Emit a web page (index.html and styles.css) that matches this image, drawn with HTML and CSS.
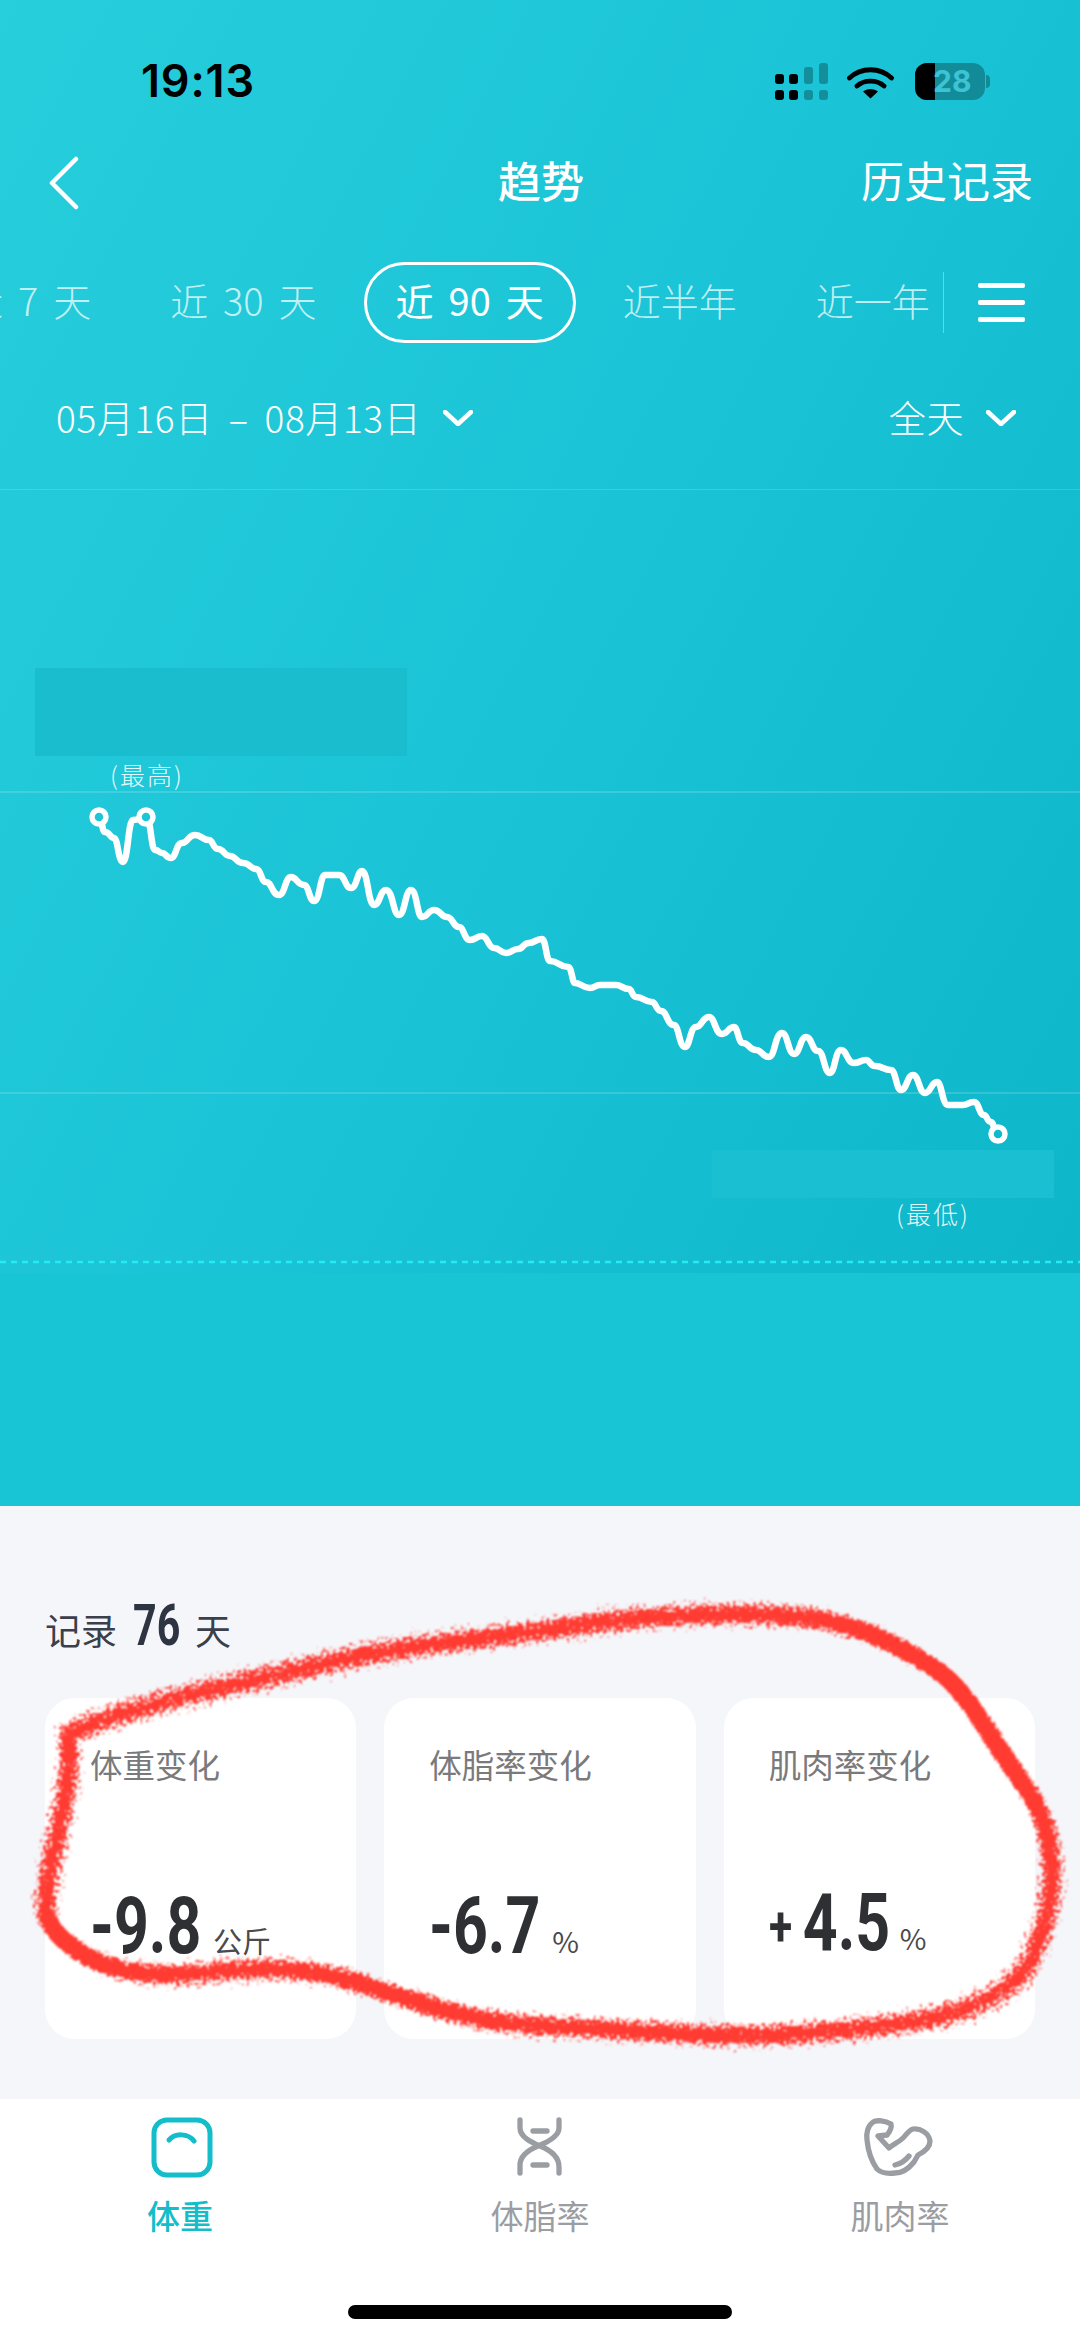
FILE: index.html
```html
<!DOCTYPE html>
<html lang="zh">
<head>
<meta charset="utf-8">
<title>趋势</title>
<link rel="stylesheet" href="styles.css">
</head>
<body>
<div class="screen">
  <section class="hero">
    <div class="status">
      <span class="time">19:13</span>
      <div class="status-icons">
        <svg class="signal" viewBox="0 0 54 37" width="54" height="37">
          <g fill="#000"><rect x="0" y="11" width="9" height="10" rx="3"/><rect x="14" y="11" width="9" height="10" rx="3"/><rect x="0" y="27" width="9" height="10" rx="3"/><rect x="14" y="27" width="9" height="10" rx="3"/></g>
          <g fill="#000" opacity=".27"><rect x="29" y="4" width="9" height="17" rx="3"/><rect x="44" y="0" width="9" height="21" rx="3"/><rect x="29" y="27" width="9" height="10" rx="3"/><rect x="44" y="27" width="9" height="10" rx="3"/></g>
        </svg>
        <svg class="wifi" viewBox="0 0 48 36" width="48" height="36">
          <path d="M2.5 15C14 4 33 4 44.5 15M10 23C17 16.500 30 16.500 37 23" fill="none" stroke="#000" stroke-width="4.800" stroke-linecap="round"/>
          <path d="M16 28.500C20 25 27 25 31 28.500L23.500 35.500Z" fill="#000"/>
        </svg>
        <div class="battery"><div class="battery-fill"></div><span class="battery-num">28</span><i class="battery-nub"></i></div>
      </div>
    </div>

    <header class="nav">
      <svg class="back" viewBox="0 0 30 54" width="30" height="54"><path d="M27 3L3 27L27 51" fill="none" stroke="#fff" stroke-width="4.500" stroke-linecap="round" stroke-linejoin="round"/></svg>
      <h1 class="title">趋势</h1>
      <a class="history">历史记录</a>
    </header>

    <div class="tabs">
      <div class="tab-scroll">
        <span class="tab">近 7 天</span>
        <span class="tab">近 30 天</span>
        <span class="tab active">近 90 天</span>
        <span class="tab">近半年</span>
        <span class="tab">近一年</span>
      </div>
      <div class="tab-menu"><i></i><i></i><i></i></div>
    </div>

    <div class="range">
      <span class="drop"><span class="drop-text">05月16日 – 08月13日</span>
        <svg viewBox="0 0 30 16" width="30" height="16"><path d="M2 2L15 14L28 2" fill="none" stroke="#fff" stroke-width="4.500" stroke-linecap="round" stroke-linejoin="round"/></svg>
      </span>
      <span class="drop"><span class="drop-text">全天</span>
        <svg viewBox="0 0 30 16" width="30" height="16"><path d="M2 2L15 14L28 2" fill="none" stroke="#fff" stroke-width="4.500" stroke-linecap="round" stroke-linejoin="round"/></svg>
      </span>
    </div>

    <div class="plot">
      <div class="mask mask-high"></div>
      <div class="mask mask-low"></div>
      <span class="point-label label-high">(最高)</span>
      <span class="point-label label-low">(最低)</span>
      <svg class="plot-svg" viewBox="0 489 1080 784" width="1080" height="784">
        <g stroke="#fff" stroke-opacity=".2" stroke-width="1.500">
          <line x1="0" y1="489" x2="1080" y2="489"/>
          <line x1="0" y1="792" x2="1080" y2="792"/>
          <line x1="0" y1="1093" x2="1080" y2="1093"/>
        </g>
        <line x1="0" y1="1262" x2="1080" y2="1262" stroke="#25ECF0" stroke-width="2.500" stroke-dasharray="6 5"/>
        <path fill="none" stroke="#fff" stroke-width="6.500" stroke-linecap="round" stroke-linejoin="round" d="M99 817C102 817 102 832 105 832C110 832 110 838 114 838C118 838 118 862 123 862C128 862 128 820 133 820C140 820 140 817 146 817C151 817 151 850 155 850C159 850 159 853 162 853C166 853 166 858 171 858C176 858 176 843 182 843C188 843 188 835 195 835C202 835 202 840 209 840C213 840 213 849 218 849C224 849 224 856 230 856C236 856 236 863 243 863C250 863 250 869 256 869C261 869 261 882 266 882C272 882 272 895 279 895C285 895 285 877 291 877C297 877 297 885 304 885C309 885 309 901 314 901C320 901 320 875 325 875L339 875C345 875 345 888 351 888C357 888 357 871 362 871C368 871 368 905 374 905C380 905 380 890 386 890C393 890 393 915 399 915C405 915 405 890 411 890C417 890 417 917 422 917C428 917 428 910 434 910C441 910 441 917 447 917C453 917 453 927 459 927C464 927 464 940 470 940C476 940 476 936 482 936C488 936 488 948 494 948C500 948 500 953 506 953C512 953 512 949 518 949C523 949 523 943 529 943C535 943 535 939 542 939C546 939 546 961 550 961C559 961 559 967 568 967C572 967 572 983 575 983C582 983 582 988 590 988C595 988 595 985 600 985L616 985C622 985 622 989 629 989C632 989 632 997 636 997C644 997 644 1002 652 1002C656 1002 656 1011 661 1011C667 1011 667 1025 674 1025C679 1025 679 1047 685 1047C690 1047 690 1027 696 1027C702 1027 702 1017 709 1017C715 1017 715 1034 722 1034C728 1034 728 1027 734 1027C738 1027 738 1043 743 1043C749 1043 749 1050 756 1050C762 1050 762 1057 769 1057C775 1057 775 1033 782 1033C788 1033 788 1054 794 1054C800 1054 800 1037 806 1037C812 1037 812 1051 818 1051C824 1051 824 1073 830 1073C835 1073 835 1050 841 1050C847 1050 847 1063 854 1063C860 1063 860 1060 866 1060C870 1060 870 1066 875 1066C883 1066 883 1070 891 1070C896 1070 896 1090 901 1090C907 1090 907 1075 913 1075C919 1075 919 1093 925 1093C931 1093 931 1082 937 1082C942 1082 942 1105 948 1105L963 1105C968 1105 968 1102 974 1102C979 1102 979 1115 984 1115C987 1115 987 1122 991 1122C994 1122 994 1134 998 1134"/>
        <g stroke="#fff" stroke-width="5.500">
          <circle cx="99" cy="817" r="7" fill="#1CC6D7"/>
          <circle cx="146" cy="817" r="7" fill="#1CC6D7"/>
          <circle cx="998" cy="1134" r="7" fill="#11B9CC"/>
        </g>
      </svg>
    </div>
    <div class="floor"></div>
  </section>

  <section class="summary">
    <p class="days">记录 <b>76</b> 天</p>
    <div class="cards">
      <article class="card">
        <span class="card-label">体重变化</span>
        <span class="card-value"><b class="num">-9.8</b><span class="unit">公斤</span></span>
      </article>
      <article class="card">
        <span class="card-label">体脂率变化</span>
        <span class="card-value"><b class="num">-6.7</b><span class="unit">%</span></span>
      </article>
      <article class="card">
        <span class="card-label">肌肉率变化</span>
        <span class="card-value"><b class="num num-signed"><span class="plus">+</span>4.5</b><span class="unit">%</span></span>
      </article>
    </div>
  </section>

  <nav class="tabbar">
    <div class="tabbar-row">
      <a class="tabbar-item current">
        <svg viewBox="0 0 100 85" width="100" height="85" fill="none" stroke="#13BDCA" stroke-width="5" stroke-linecap="round">
          <rect x="24" y="15" width="56" height="55" rx="13"/>
          <path d="M39 35C45 28 58 28 64 36"/>
        </svg>
        <span>体重</span>
      </a>
      <a class="tabbar-item">
        <svg viewBox="0 0 85 85" width="85" height="85" fill="none" stroke="#9A9EA3" stroke-width="5.300" stroke-linecap="round">
          <path d="M22 15V23C22 32 33 37 42 41C52 45 61 51 61 62V68M61 15V23C61 31 50 37 40 41C28 46 22 52 22 60V68M35 26H49M35 60H49"/>
        </svg>
        <span>体脂率</span>
      </a>
      <a class="tabbar-item">
        <svg viewBox="0 0 100 85" width="100" height="85" fill="none" stroke="#9A9EA3" stroke-width="5.300" stroke-linecap="round" stroke-linejoin="round">
          <path d="M28 31L37 30C41 25 42 22 41 19C36 16 26 14 22 18C18 21 16 28 17 35C18 45 22 57 27 64C31 68 37 69 45 68C53 68 60 62 64 57L68 50C74 47 80 42 80 36C79 28 70 23 63 24C59 25 56 30 53 33C49 37 44 39 39 43Z"/>
          <path d="M45 60C50 59 55 56 59 51"/>
        </svg>
        <span>肌肉率</span>
      </a>
    </div>
    <div class="home-bar"></div>
  </nav>

  <svg class="scribble" viewBox="0 0 1080 2341" width="1080" height="2341">
    <defs>
      <filter id="rough" x="-5%" y="-5%" width="110%" height="110%">
        <feTurbulence type="fractalNoise" baseFrequency=".3" numOctaves="3" seed="7"/>
        <feDisplacementMap in="SourceGraphic" scale="24"/>
        <feGaussianBlur stdDeviation=".8"/>
      </filter>
    </defs>
    <path filter="url(#rough)" fill="none" stroke="#FF3B30" stroke-width="18" stroke-linecap="round" stroke-linejoin="round" d="M69 1733L113 1717Q158 1702 223 1687Q289 1672 337 1661Q386 1650 458 1641Q530 1633 582 1625Q634 1617 696 1615Q758 1613 802 1617Q847 1622 888 1642Q930 1663 947 1678Q964 1693 984 1725Q1005 1757 1026 1788Q1047 1820 1050 1848Q1054 1877 1050 1898Q1047 1920 1036 1948Q1026 1977 995 1995Q964 2013 923 2020Q882 2027 820 2032Q758 2038 689 2034Q620 2030 558 2027Q496 2025 447 2011Q399 1997 365 1985Q331 1973 293 1970Q255 1968 210 1972Q165 1977 134 1972Q103 1968 75 1949Q48 1930 46 1911Q45 1893 52 1860Q59 1827 64 1802Q69 1777 69 1757L69 1733"/>
  </svg>
</div>
</body>
</html>
```

FILE: styles.css
```css
* { box-sizing: border-box; }
html, body { margin: 0; padding: 0; }
body {
  width: 1080px;
  height: 2341px;
  overflow: hidden;
  background: #fff;
  font-family: "Noto Sans CJK SC", "Noto Sans", sans-serif;
}
.screen {
  position: relative;
  width: 1080px;
  height: 2341px;
  display: flex;
  flex-direction: column;
  overflow: hidden;
}

/* hero */
.hero {
  height: 1506px;
  display: flex;
  flex-direction: column;
  color: #fff;
  background: linear-gradient(118deg, #27CEDC 0%, #1BC4D6 45%, #0CB4C8 100%);
}
.status {
  height: 156px;
  padding: 6px 95px 0 141px;
  display: flex;
  align-items: center;
  justify-content: space-between;
  color: #000;
}
.time {
  font-family: Inter, sans-serif;
  font-weight: 600;
  font-size: 45px;
  line-height: 50px;
  letter-spacing: .8px;
}
.status-icons { display: flex; align-items: center; gap: 20px; }
.signal, .wifi { display: block; }
.signal { margin-right: -2px; }
.battery {
  position: relative;
  width: 70px;
  height: 37px;
  border-radius: 12px;
  background: rgba(0, 0, 0, .28);
}
.battery-fill {
  width: 20px;
  height: 100%;
  background: #000;
  border-radius: 12px 0 0 12px;
}
.battery-num {
  position: absolute;
  left: 18px;
  top: 0;
  font-family: Inter, sans-serif;
  font-weight: 700;
  font-size: 30px;
  line-height: 37px;
  color: #3CC4D4;
}
.battery-nub {
  position: absolute;
  right: -5px;
  top: 12px;
  width: 4px;
  height: 13px;
  border-radius: 0 4px 4px 0;
  background: rgba(0, 0, 0, .28);
}

.nav {
  height: 44px;
  padding: 0 47px 0 49px;
  display: grid;
  grid-template-columns: 1fr auto 1fr;
  align-items: center;
}
.back { display: block; }
.title {
  margin: -8px 0 0;
  font-size: 43px;
  line-height: 44px;
  font-weight: 500;
}
.history {
  justify-self: end;
  margin-top: -8px;
  font-size: 43px;
  line-height: 44px;
  font-weight: 400;
}

.tabs {
  margin-top: 62px;
  height: 81px;
  display: flex;
  align-items: center;
}
.tab-scroll {
  width: 943px;
  height: 81px;
  overflow: hidden;
  display: flex;
  gap: 15px;
}
.tab {
  flex: none;
  height: 81px;
  padding: 0 29px 6px;
  display: flex;
  align-items: center;
  border-radius: 41px;
  border: 3px solid transparent;
  font-size: 38px;
  font-weight: 300;
  word-spacing: 6.500px;
  color: rgba(255, 255, 255, .72);
  white-space: nowrap;
}
.tab:first-child { margin-left: -67px; }
.tab.active {
  border-color: #fff;
  color: #fff;
  font-weight: 400;
}
.tab-menu {
  height: 61px;
  padding-left: 34px;
  border-left: 1px solid rgba(255, 255, 255, .35);
  display: flex;
  flex-direction: column;
  justify-content: center;
  gap: 12px;
}
.tab-menu i {
  display: block;
  width: 47px;
  height: 5px;
  border-radius: 2px;
  background: #fff;
}

.range {
  margin-top: 55px;
  height: 40px;
  padding: 0 64px 0 56px;
  display: flex;
  justify-content: space-between;
  align-items: center;
}
.drop {
  display: flex;
  align-items: center;
  gap: 22px;
  font-size: 37px;
  line-height: 40px;
  font-weight: 300;
  white-space: nowrap;
}
.drop-text {
  padding-bottom: 2px;
  letter-spacing: .6px;
  word-spacing: 7px;
}

.plot {
  position: relative;
  margin-top: 51px;
  flex: 1;
}
.plot-svg { position: absolute; left: 0; top: 0; display: block; }
.mask { position: absolute; }
.mask-high { left: 35px; top: 179px; width: 372px; height: 88px; background: #19BDCE; }
.mask-low { left: 712px; top: 661px; width: 342px; height: 48px; background: #1ABFD1; }
.point-label {
  position: absolute;
  font-size: 25px;
  line-height: 30px;
  font-weight: 300;
  letter-spacing: 2px;
  color: rgba(255, 255, 255, .9);
}
.label-high { left: 110px; top: 270px; }
.label-low { left: 896px; top: 709px; }
.floor { height: 233px; background: #18C5D5; }

/* summary */
.summary {
  flex: 1;
  padding: 0 45px;
  background: #F5F6FA;
}
.days {
  margin: 94px 0 0;
  height: 50px;
  display: flex;
  align-items: baseline;
  gap: 16px;
  font-size: 36px;
  line-height: 50px;
  color: #3A3F4B;
}
.days b {
  width: 46px;
  white-space: nowrap;
  font-family: Roboto, sans-serif;
  font-weight: 700;
  font-size: 58px;
  line-height: 50px;
  color: #2E3442;
  transform: scaleX(.71);
  transform-origin: left center;
}
.cards {
  margin-top: 48px;
  display: flex;
  gap: 28px;
}
.card {
  width: 312px;
  height: 341px;
  padding: 45px 0 78px 45px;
  border-radius: 30px;
  background: #fff;
  display: flex;
  flex-direction: column;
  justify-content: space-between;
}
.card-label {
  font-size: 32.500px;
  line-height: 42px;
  color: #7A7A7C;
}
.card-value {
  display: flex;
  align-items: baseline;
  gap: 15px;
  line-height: 70px;
}
.num {
  width: 108px;
  white-space: nowrap;
  font-family: Roboto, sans-serif;
  font-weight: 700;
  font-size: 80px;
  line-height: 70px;
  color: #2F3033;
  transform: scaleX(.76);
  transform-origin: left center;
}
.num-signed { width: 116px; }
.plus {
  display: inline-block;
  font-size: 56px;
  margin-right: 14px;
  vertical-align: 5px;
}
.unit {
  font-size: 29px;
  line-height: 30px;
  color: #4A4A4C;
}

/* tab bar */
.tabbar {
  height: 242px;
  background: #fff;
  display: flex;
  flex-direction: column;
  align-items: center;
}
.tabbar-row {
  width: 100%;
  padding-top: 6px;
  display: flex;
}
.tabbar-item {
  flex: 1;
  display: flex;
  flex-direction: column;
  align-items: center;
  font-size: 33px;
  line-height: 50px;
  color: #9A9EA3;
}
.tabbar-item svg { display: block; }
.tabbar-item.current { color: #13BDCA; font-weight: 500; }
.home-bar {
  margin-top: 65px;
  width: 384px;
  height: 14px;
  border-radius: 7px;
  background: #000;
}

.scribble {
  position: absolute;
  left: 0;
  top: 0;
  pointer-events: none;
}
```
